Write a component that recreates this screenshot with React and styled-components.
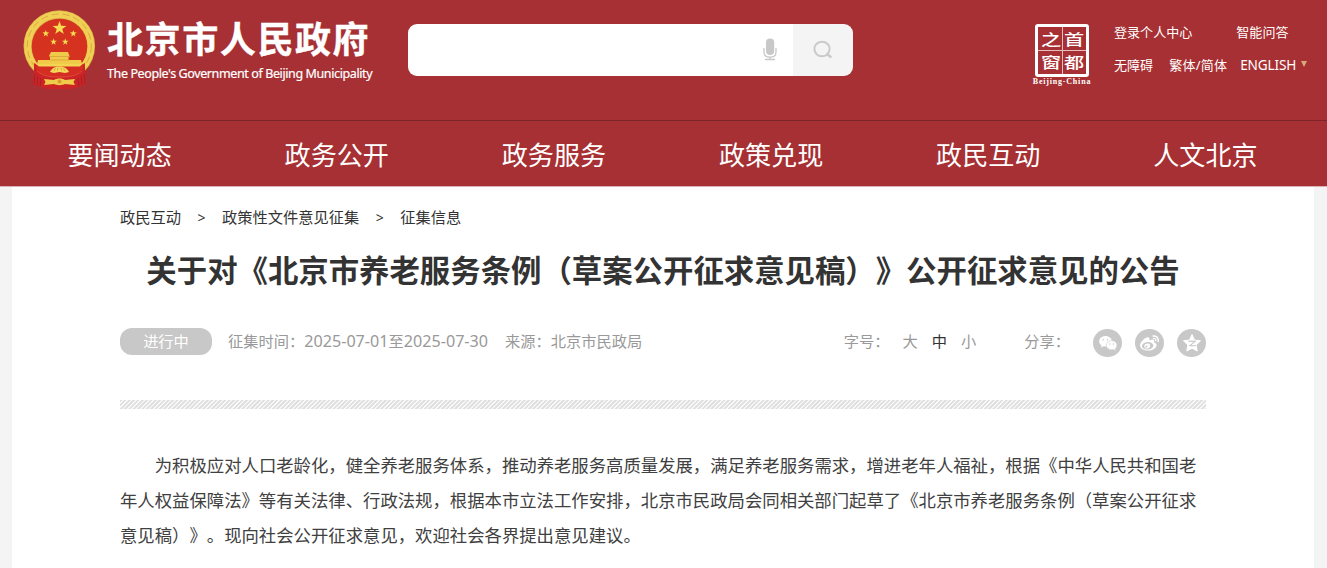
import styled, { createGlobalStyle } from "styled-components";
import { FaWeibo } from "react-icons/fa";

const navItems = ["要闻动态", "政务公开", "政务服务", "政策兑现", "政民互动", "人文北京"];

const crumbs = ["政民互动", "政策性文件意见征集", "征集信息"];

const star = (cx, cy, r) =>
  Array.from({ length: 10 }, (_, i) => {
    const radius = i % 2 ? r * 0.4 : r;
    const a = (Math.PI / 5) * i - Math.PI / 2;
    return `${cx + radius * Math.cos(a)},${cy + radius * Math.sin(a)}`;
  }).join(" ");

const Emblem = () => (
  <EmblemSvg viewBox="0 0 73 79">
    <circle cx="36.3" cy="36" r="35.8" fill="#d9a941" />
    <circle cx="36.3" cy="36" r="31.6" fill="none" stroke="#f0cf55" strokeWidth="7" />
    <circle
      cx="36.3"
      cy="36"
      r="32"
      fill="none"
      stroke="#dba83e"
      strokeWidth="1"
      strokeDasharray="7 4"
    />
    <circle cx="36.5" cy="36.500" r="27.8" fill="#d5321f" />
    <polygon points={star(36.5, 18.2, 7.3)} fill="#f5dc50" />
    <polygon points={star(22.8, 23.5, 3.6)} fill="#f5dc50" />
    <polygon points={star(50.3, 23.5, 3.6)} fill="#f5dc50" />
    <polygon points={star(30.6, 31.8, 3.5)} fill="#f5dc50" />
    <polygon points={star(42.3, 31.8, 3.5)} fill="#f5dc50" />
    <path d="M28 42h17l1.500 4h-1v4H58l1 4H14l1-4h12v-4h-1z" fill="#f0cb4a" />
    <path d="M26 46.5h21M27 50h19" stroke="#d9a03a" strokeWidth="0.8" />
    <path d="M11 53l6 3h39l6-3v9l-11 9H22l-11-9z" fill="#d42d22" />
    <path d="M13 54h46l-2 2.500H16z" fill="#f3d453" />
    <path
      d="M12 54c-2 5-1 14-2.500 20l7 2.500L24 79h25l8-2.500 6-2.500c-1-6 0-15-2-20l-2 6c-5 5-12 7-23 7s-17-2-22-7z"
      fill="#cb2427"
    />
    <path
      d="M12 64l-1 10M15 66l-1 9M18 68l-1 8M61 64l1 10M58 66l1 9M55 68l1 8"
      stroke="#9d1d22"
      strokeWidth="0.8"
    />
    <path d="M14 61c6 5 13 6 22.500 6S53 66 59 61" fill="none" stroke="#e5483a" strokeWidth="1" />
    <path d="M27 62c2-4 5-5.500 9.500-5.500s7.500 1.500 9.500 5.500l-4 1-5.500-1-5.500 1z" fill="#f5d85a" />
    <path d="M31 61l1.500-3M34.500 60.500l.5-3M38.500 60.500l-.5-3M42 61l-1.500-3" stroke="#d89c33" strokeWidth="0.8" />
    <path d="M21 69l10 1c3-2 8-2 11 0l10-1-1.500 3 1.500 3-10-1c-3 1.500-8 1.500-11 0l-10 1 1.500-3z" fill="#f0cb4a" />
    <circle cx="36.5" cy="71.500" r="2" fill="#d89c33" />
  </EmblemSvg>
);

const MicIcon = () => (
  <svg width="14" height="24" viewBox="0 0 14 24" fill="none" stroke="#c8c8c8">
    <rect x="3" y="0.500" width="8.200" height="16.500" rx="4.100" fill="#c8c8c8" stroke="none" />
    <path d="M1 10v4c0 3.500 2.500 5.200 6 5.200s6-1.700 6-5.200v-4M7 19v2.500M2 21.500h10" strokeWidth="1.300" />
  </svg>
);

const SearchIcon = () => (
  <svg width="20" height="20" viewBox="0 0 20 20" fill="none" stroke="#cacaca">
    <ellipse cx="9" cy="9" rx="7.600" ry="7.300" strokeWidth="2" />
    <path d="M13.500 13.500l4.800 4" strokeWidth="2.600" />
  </svg>
);

const WechatIcon = () => (
  <svg width="20" height="18" viewBox="0 0 20 18">
    <path
      d="M7.500 2c3.600 0 6.300 2.300 6.300 5.200 0 3-2.700 5.300-6.300 5.300l-2-.3L3 13.600l.5-2.200C2 10.400 1.200 9 1.200 7.200 1.200 4.300 3.900 2 7.500 2z"
      fill="#fff"
    />
    <path
      d="M13.600 6.700c3 0 5.300 2 5.300 4.500 0 1.400-.7 2.600-1.700 3.500l.4 1.800-2.200-1-1.800.2c-3 0-5.300-2-5.300-4.500s2.300-4.500 5.300-4.500z"
      fill="#fff"
      stroke="#d2d2d2"
      strokeWidth="0.700"
    />
    <g fill="#c8c8c8">
      <circle cx="5.300" cy="5.800" r="0.800" />
      <circle cx="9.600" cy="5.800" r="0.800" />
      <circle cx="11.900" cy="10" r="0.700" />
      <circle cx="15.400" cy="10" r="0.700" />
    </g>
  </svg>
);

const QzoneIcon = () => (
  <svg width="20" height="20" viewBox="0 0 20 20">
    <path
      d="M10 1.500l2.500 5.600 6 .7-4.300 4.200 1 6-5.200-2.800L4.800 18l1-6-4.300-4.200 6-.7z"
      fill="#fff"
      stroke="#fff"
      strokeLinejoin="round"
    />
    <path
      d="M6.500 8.400c2.500-.4 4.500-.4 6.700 0l-5.300 4.200c2 .3 3.800.3 6.300-.1"
      fill="none"
      stroke="#c8c8c8"
      strokeWidth="1.100"
    />
  </svg>
);

const Header = () => (
  <HeaderBar>
    <Emblem />
    <Brand>
      <BrandName>北京市人民政府</BrandName>
      <BrandSub>The People's Government of Beijing Municipality</BrandSub>
    </Brand>
    <SearchBox>
      <SearchField>
        <MicIcon />
      </SearchField>
      <SearchBtn aria-label="搜索">
        <SearchIcon />
      </SearchBtn>
    </SearchBox>
    <Capital>
      <Seal>
        {["之", "首", "窗", "都"].map((word) => (
          <SealCell key={word}>
            <SealWord>{word}</SealWord>
          </SealCell>
        ))}
      </Seal>
      <SealCaption>Beijing-China</SealCaption>
    </Capital>
    <Links>
      <LinkRow $gap="44px">
        <a>登录个人中心</a>
        <a>智能问答</a>
      </LinkRow>
      <LinkRow $gap="13px">
        <a>无障碍</a>
        <WideLink>繁体/简体</WideLink>
        <English>
          ENGLISH
          <Caret />
        </English>
      </LinkRow>
    </Links>
  </HeaderBar>
);

const App = () => {
  return (
    <Page>
      <GlobalStyle />
      <Header />
      <Nav>
        {navItems.map((item) => (
          <NavItem key={item}>{item}</NavItem>
        ))}
      </Nav>
      <Content>
        <Breadcrumb>
          {crumbs.map((crumb, i) => (
            <Crumb key={crumb}>
              {i > 0 && <Arrow>&gt;</Arrow>}
              {crumb}
            </Crumb>
          ))}
        </Breadcrumb>
        <Title>关于对《北京市养老服务条例（草案公开征求意见稿）》公开征求意见的公告</Title>
        <Meta>
          <Status>进行中</Status>
          <Period>
            征集时间：<Digits>2025-07-01</Digits>至<Digits>2025-07-30</Digits>
          </Period>
          <Label>来源：北京市民政局</Label>
          <Sizes>
            <SizeLabel>字号：</SizeLabel>
            <Size>大</Size>
            <Size $active>中</Size>
            <Size>小</Size>
          </Sizes>
          <ShareLabel>分享：</ShareLabel>
          <ShareList>
            <ShareBtn>
              <WechatIcon />
            </ShareBtn>
            <ShareBtn>
              <FaWeibo size={19} />
            </ShareBtn>
            <ShareBtn>
              <QzoneIcon />
            </ShareBtn>
          </ShareList>
        </Meta>
        <Divider />
        <Paragraph>
          为积极应对人口老龄化，健全养老服务体系，推动养老服务高质量发展，满足养老服务需求，增进老年人福祉，根据《中华人民共和国老年人权益保障法》等有关法律、行政法规，根据本市立法工作安排，北京市民政局会同相关部门起草了《北京市养老服务条例（草案公开征求意见稿）》。现向社会公开征求意见，欢迎社会各界提出意见建议。
        </Paragraph>
      </Content>
    </Page>
  );
};

export default App;

const GlobalStyle = createGlobalStyle`
  * {
    box-sizing: border-box;
  }

  body {
    margin: 0;
    overflow: hidden;
    background: #f4f4f4;
    font-family: "Noto Sans", "Noto Sans CJK SC", sans-serif;
    text-spacing-trim: space-all;
  }
`;

const Page = styled.div`
  height: 568px;
  display: flex;
  flex-direction: column;
`;

const HeaderBar = styled.header`
  height: 121px;
  flex: none;
  display: flex;
  align-items: flex-start;
  padding-left: 23px;
  background: #a63033;
  border-bottom: 1px solid #7c2528;
  color: #fff;
`;

const EmblemSvg = styled.svg`
  width: 73px;
  height: 79px;
  margin-top: 10px;
  flex: none;
`;

const Brand = styled.div`
  width: 301px;
  margin: 15px 0 0 11px;
  flex: none;
  white-space: nowrap;
`;

const BrandName = styled.div`
  font-family: "Noto Sans CJK SC", sans-serif;
  font-size: 36px;
  font-weight: 700;
  line-height: 44px;
  letter-spacing: 1.6px;
  -webkit-text-stroke: 0.4px #fff;
`;

const BrandSub = styled.div`
  font-size: 12.5px;
  line-height: 18px;
  margin-top: 6px;
  letter-spacing: -0.39px;
  -webkit-text-stroke: 0.2px #fff;
`;

const SearchBox = styled.div`
  width: 445px;
  height: 52px;
  margin-top: 23.5px;
  flex: none;
  display: flex;
  border-radius: 9px;
  overflow: hidden;
`;

const SearchField = styled.div`
  flex: 1;
  display: flex;
  align-items: center;
  justify-content: flex-end;
  padding-right: 16px;
  background: #fff;
`;

const SearchBtn = styled.button`
  width: 60px;
  padding: 0;
  border: none;
  display: flex;
  align-items: center;
  justify-content: center;
  background: #f4f4f4;
`;

const Capital = styled.div`
  width: 60px;
  margin: 24px 0 0 179px;
  flex: none;
  display: flex;
  flex-direction: column;
  align-items: center;
`;

const Seal = styled.div`
  width: 54px;
  height: 53px;
  padding: 1px;
  display: grid;
  grid-template-columns: 1fr 1fr;
  grid-template-rows: 1fr 1fr;
  border: 3px solid #fff;
  border-radius: 3px;
  background:
    linear-gradient(#e5bfc0, #e5bfc0) center / 1px 100% no-repeat,
    linear-gradient(#e5bfc0, #e5bfc0) center / 100% 1px no-repeat;
`;

const SealCell = styled.div`
  display: flex;
  align-items: center;
  justify-content: center;
`;

const SealWord = styled.span`
  font-family: "Noto Sans CJK SC", sans-serif;
  font-size: 18px;
  font-weight: 500;
  line-height: 20px;
  transform: translateY(-1px) scale(1.12, 0.84);
`;

const SealCaption = styled.div`
  font-family: "Liberation Serif", serif;
  font-size: 8px;
  font-weight: 700;
  line-height: 9px;
  letter-spacing: 0.8px;
  white-space: nowrap;
`;

const Links = styled.div`
  margin: 21px 0 0 22px;
  font-size: 13.05px;
  white-space: nowrap;
`;

const LinkRow = styled.div`
  height: 20px;
  display: flex;
  align-items: center;
  gap: ${({ $gap }) => $gap};
  margin-bottom: 13px;
`;

const WideLink = styled.a`
  margin-left: 3px;
  letter-spacing: 0.2px;
`;

const English = styled.a`
  display: flex;
  align-items: center;
  gap: 5px;
  font-size: 13.6px;
  letter-spacing: -0.15px;
`;

const Caret = styled.span`
  border: 3px solid transparent;
  border-top: 6px solid #d9a97c;
  border-bottom: none;
`;

const Nav = styled.nav`
  height: 66px;
  flex: none;
  display: grid;
  grid-template-columns: repeat(6, 1fr);
  padding: 0 13px 0 11px;
  background: #a63033;
  border-bottom: 1px solid #dcb3b4;
`;

const NavItem = styled.a`
  display: flex;
  align-items: center;
  justify-content: center;
  padding-top: 1px;
  font-size: 26.1px;
  color: #fff;
`;

const Content = styled.main`
  flex: 1;
  margin: 0 13px 0 12px;
  padding: 0 108px;
  background: #fff;
`;

const Breadcrumb = styled.div`
  height: 61px;
  display: flex;
  align-items: center;
  padding-bottom: 3px;
  font-size: 15.25px;
  color: #333;
`;

const Crumb = styled.span`
  display: flex;
  align-items: baseline;
`;

const Arrow = styled.span`
  width: 41px;
  text-align: center;
  font-size: 14px;
`;

const Title = styled.h1`
  margin: 0;
  height: 46px;
  font-size: 30.4px;
  font-weight: 700;
  line-height: 46px;
  text-align: center;
  white-space: nowrap;
  color: #333;
`;

const Meta = styled.div`
  height: 28px;
  margin-top: 35px;
  display: flex;
  align-items: center;
  font-size: 15.25px;
  line-height: 24px;
  white-space: nowrap;
  color: #999;
`;

const Status = styled.span`
  width: 92px;
  height: 27px;
  margin: -3px 16px 0 0;
  border-radius: 12px;
  line-height: 26px;
  text-align: center;
  background: #c8c8c8;
  color: #fff;
`;

const Label = styled.span`
  margin-top: -4px;
`;

const Period = styled(Label)`
  margin-right: 17px;
`;

const Digits = styled.span`
  font-size: 16.15px;
`;

const Sizes = styled(Label)`
  margin-left: auto;
  display: flex;
  gap: 14px;
`;

const SizeLabel = styled.span`
  margin-right: -1px;
`;

const Size = styled.span`
  color: ${({ $active }) => ($active ? "#333" : "#999")};
`;

const ShareLabel = styled(Label)`
  margin-right: 23px;
  margin-left: 48px;
`;

const ShareList = styled.div`
  display: flex;
  gap: 13px;
`;

const ShareBtn = styled.a`
  width: 29px;
  height: 28px;
  display: flex;
  align-items: center;
  justify-content: center;
  border-radius: 50%;
  background: #c8c8c8;
  color: #fff;
`;

const Divider = styled.div`
  height: 9px;
  margin-top: 43px;
  background: repeating-linear-gradient(135deg, #e0e0e0 0 1.5px, #fafafa 1.9px 2.7px, #e0e0e0 3.07px);
`;

const Paragraph = styled.p`
  margin: 39px 0 0;
  font-size: 17.37px;
  line-height: 34.75px;
  text-indent: 2em;
  color: #404040;
`;
